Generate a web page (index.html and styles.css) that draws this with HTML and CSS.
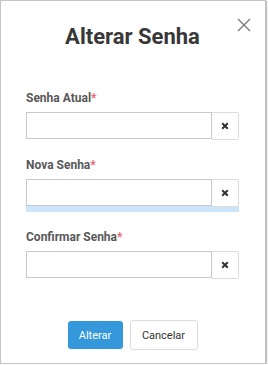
FILE: index.html
```html
<!DOCTYPE html>
<html lang="pt">
<head>
    <meta charset="UTF-8">
    <meta name="viewport" content="width=device-width, initial-scale=1.0">
    <title>Alterar Senha</title>
    <link rel="stylesheet" href="styles.css">
</head>
<body>
    <div class="modal">
        <button class="close" type="button" aria-label="Fechar">
            <svg width="14" height="14" viewBox="0 0 14 14"><path d="M1 1L13 13M13 1L1 13" stroke="#7a7a7a" stroke-width="1.4" fill="none"/></svg>
        </button>
        <h1 class="modal-title">Alterar Senha</h1>

        <form class="modal-body">
            <div class="form-group">
                <label>Senha Atual<span class="req">*</span></label>
                <div class="input-group">
                    <input type="password">
                    <button class="clear" type="button">
                        <svg width="8" height="8" viewBox="0 0 8 8"><path d="M1.2 1.2L6.8 6.8M6.8 1.2L1.2 6.8" stroke="#333" stroke-width="2" fill="none"/></svg>
                    </button>
                </div>
            </div>

            <div class="form-group">
                <label>Nova Senha<span class="req">*</span></label>
                <div class="input-group">
                    <input type="password">
                    <button class="clear" type="button">
                        <svg width="8" height="8" viewBox="0 0 8 8"><path d="M1.2 1.2L6.8 6.8M6.8 1.2L1.2 6.8" stroke="#333" stroke-width="2" fill="none"/></svg>
                    </button>
                </div>
                <div class="strength"></div>
            </div>

            <div class="form-group">
                <label>Confirmar Senha<span class="req">*</span></label>
                <div class="input-group">
                    <input type="password">
                    <button class="clear" type="button">
                        <svg width="8" height="8" viewBox="0 0 8 8"><path d="M1.2 1.2L6.8 6.8M6.8 1.2L1.2 6.8" stroke="#333" stroke-width="2" fill="none"/></svg>
                    </button>
                </div>
            </div>

            <div class="modal-footer">
                <button class="btn btn-primary" type="submit">Alterar</button>
                <button class="btn btn-default" type="button">Cancelar</button>
            </div>
        </form>
    </div>
</body>
</html>
```

FILE: styles.css
```css
body {
    margin: 0;
    font-family: Roboto, "Liberation Sans", Arial, sans-serif;
    background-color: #fff;
}
.modal {
    position: relative;
    width: 266px;
    height: 364px;
    box-sizing: border-box;
    padding: 23px 26px 0 25px;
    border: 1px solid #c4c4c4;
    box-shadow: 1px 1px 1px rgba(0, 0, 0, 0.25);
    background-color: #fff;
}
.close {
    position: absolute;
    top: 17px;
    right: 14px;
    padding: 0;
    border: none;
    background: none;
    width: 14px;
    height: 14px;
    cursor: pointer;
}
.close svg {
    display: block;
}
.modal-title {
    margin: 0 0 40px;
    font-size: 22px;
    line-height: 26px;
    font-weight: 700;
    color: #383838;
    text-align: center;
}
.modal-body {
    margin: 0;
}
.form-group {
    margin-bottom: 17px;
}
.form-group label {
    display: block;
    font-size: 12px;
    line-height: 16px;
    font-weight: 700;
    color: #585858;
    margin-bottom: 6px;
}
.req {
    color: #e8636a;
}
.input-group {
    display: flex;
    align-items: flex-start;
}
.input-group input {
    flex: 1;
    min-width: 0;
    height: 27px;
    box-sizing: border-box;
    margin: 0;
    padding: 0 6px;
    border: 1px solid #c8c8c8;
    outline: none;
}
.clear {
    width: 27px;
    height: 28px;
    box-sizing: border-box;
    margin: 0;
    padding: 0;
    border: 1px solid #dcdcdc;
    border-left: none;
    border-radius: 0 2px 2px 0;
    background: #fff;
    display: flex;
    align-items: center;
    justify-content: center;
    cursor: pointer;
}
.strength {
    height: 6px;
    margin-top: -1px;
    margin-bottom: 2px;
    background-color: #cbe5fa;
}
.modal-footer {
    display: flex;
    justify-content: center;
    align-items: center;
    gap: 7px;
    margin-top: 41px;
}
.btn {
    font-family: Roboto, "Liberation Sans", Arial, sans-serif;
    font-size: 11px;
    border-radius: 3px;
    cursor: pointer;
    box-sizing: border-box;
    padding: 0;
}
.btn-primary {
    width: 55px;
    height: 28px;
    border: none;
    background-color: #3498db;
    color: #fff;
}
.btn-default {
    width: 68px;
    height: 30px;
    border: 1px solid #dcdcdc;
    background-color: #fff;
    color: #333;
}
```
